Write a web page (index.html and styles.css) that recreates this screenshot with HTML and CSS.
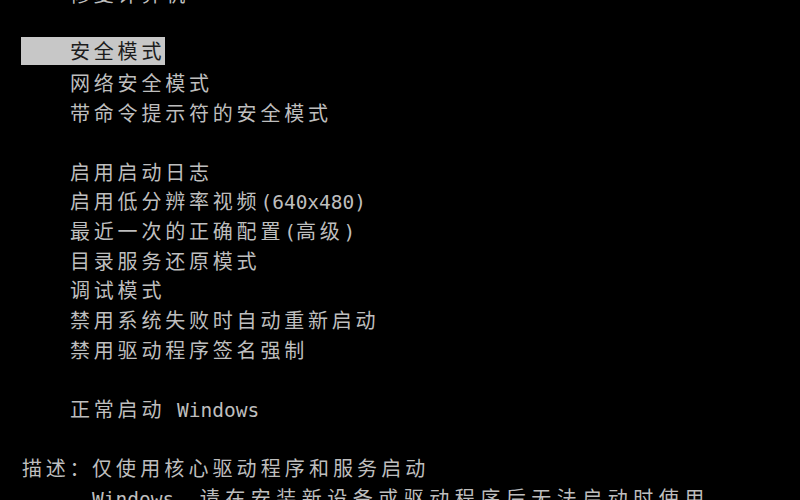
FILE: index.html
```html
<!DOCTYPE html>
<html lang="zh-CN">
<head>
<meta charset="utf-8">
<title>高级启动选项</title>
<link rel="stylesheet" href="styles.css">
</head>
<body>
<div class="screen">
  <div class="row item">修复计算机</div>
  <div class="row"></div>
  <div class="row item"><span class="sel">安全模式</span></div>
  <div class="row item">网络安全模式</div>
  <div class="row item">带命令提示符的安全模式</div>
  <div class="row"></div>
  <div class="row item">启用启动日志</div>
  <div class="row item">启用低分辨率视频<span class="en">(640x480)</span></div>
  <div class="row item">最近一次的正确配置<span class="en">(</span>高级<span class="en">)</span></div>
  <div class="row item">目录服务还原模式</div>
  <div class="row item">调试模式</div>
  <div class="row item">禁用系统失败时自动重新启动</div>
  <div class="row item">禁用驱动程序签名强制</div>
  <div class="row"></div>
  <div class="row item">正常启动<span class="en"> Windows</span></div>
  <div class="row"></div>
  <div class="desc">
    <div class="label">描述：</div>
    <div class="desc-text">
      <div class="row desc-line1">仅使用核心驱动程序和服务启动</div>
      <div class="row desc-line2"><span class="en">Windows</span>。请在安装新设备或驱动程序后无法启动时使用。</div>
    </div>
  </div>
</div>
</body>
</html>
```
FILE: styles.css
```css
html, body {
  margin: 0;
  padding: 0;
  background: #000;
  overflow: hidden;
}

.screen {
  width: 800px;
  height: 500px;
  overflow: hidden;
  box-sizing: border-box;
  display: flex;
  flex-direction: column;
  color: #bebebe;
  font-family: "DejaVu Sans Mono", "Noto Sans CJK SC", monospace;
  font-size: 20px;
  letter-spacing: 3.8px;
  white-space: nowrap;
}

.screen > .row:first-child {
  margin-top: -19px;
}

.row {
  height: 29.65px;
  line-height: 29.65px;
  flex: none;
  display: flex;
  align-items: center;
}

.item {
  padding-left: 70px;
}

.en {
  font-size: 19.5px;
  letter-spacing: 0;
  white-space: pre;
}

.sel {
  align-self: flex-start;
  margin-top: -3px;
  box-sizing: border-box;
  height: 28px;
  line-height: 25px;
  padding-top: 3px;
  padding-left: 49px;
  margin-left: -49px;
  background: #c7c7c7;
  color: #1c1c1c;
}

.desc {
  display: flex;
  flex: none;
}

.label {
  width: 70px;
  padding-left: 22px;
  height: 29.65px;
  line-height: 29.65px;
}

.desc-text {
  display: flex;
  flex-direction: column;
}

.desc-line1 {
  letter-spacing: 4.1px;
}

.desc-line2 {
  letter-spacing: 5.5px;
}
```
